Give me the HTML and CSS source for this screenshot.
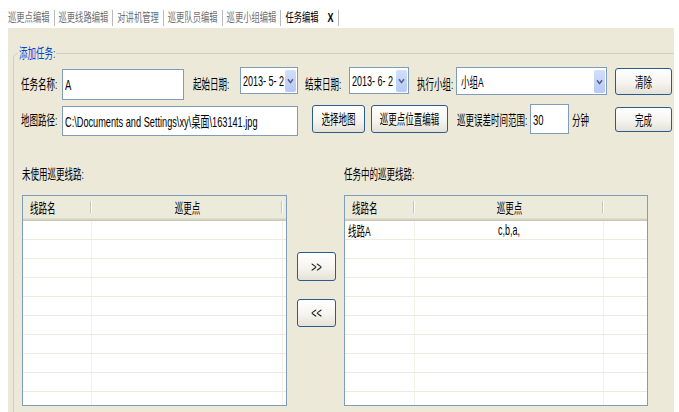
FILE: index.html
```html
<!DOCTYPE html>
<html lang="zh-CN">
<head>
<meta charset="utf-8">
<title>任务编辑</title>
<link rel="stylesheet" href="styles.css">
</head>
<body>
<div class="tabs">
  <div class="tab"><span class="tx">巡更点编辑</span></div>
  <div class="tab"><span class="tx">巡更线路编辑</span></div>
  <div class="tab"><span class="tx">对讲机管理</span></div>
  <div class="tab"><span class="tx">巡更队员编辑</span></div>
  <div class="tab"><span class="tx">巡更小组编辑</span></div>
  <div class="tab active"><span class="tx">任务编辑</span><span class="tx close">X</span></div>
</div>
<div class="panel">
  <div class="group">
    <div class="legend"><span class="tx">添加任务:</span></div>

    <div class="row r1">
      <div class="lbl w-l4"><span class="tx">任务名称:</span></div>
      <div class="field f-name"><span class="tx val">A</span></div>
      <div class="lbl l-start"><span class="tx">起始日期:</span></div>
      <div class="field f-date f-date1"><span class="tx val">2013- 5- 2</span><span class="drop"><svg width="7" height="6" viewBox="0 0 7 6"><path d="M1 1.2L3.5 4.6L6 1.2" fill="none" stroke="#4d6185" stroke-width="1.5"/></svg></span></div>
      <div class="lbl l-end"><span class="tx">结束日期:</span></div>
      <div class="field f-date f-date2"><span class="tx val">2013- 6- 2</span><span class="drop"><svg width="7" height="6" viewBox="0 0 7 6"><path d="M1 1.2L3.5 4.6L6 1.2" fill="none" stroke="#4d6185" stroke-width="1.5"/></svg></span></div>
      <div class="lbl l-team"><span class="tx">执行小组:</span></div>
      <div class="field f-team"><span class="tx val">小组A</span><span class="drop"><svg width="7" height="6" viewBox="0 0 7 6"><path d="M1 1.2L3.5 4.6L6 1.2" fill="none" stroke="#4d6185" stroke-width="1.5"/></svg></span></div>
      <div class="btn b-clear"><span class="tx">清除</span></div>
    </div>

    <div class="row r2">
      <div class="lbl w-l4"><span class="tx">地图路径:</span></div>
      <div class="field f-path"><span class="tx val">C:\Documents and Settings\xy\桌面\163141.jpg</span></div>
      <div class="btn b-map"><span class="tx">选择地图</span></div>
      <div class="btn b-pos"><span class="tx">巡更点位置编辑</span></div>
      <div class="lbl l-range"><span class="tx">巡更误差时间范围:</span></div>
      <div class="field f-min"><span class="tx val">30</span></div>
      <div class="lbl l-unit"><span class="tx">分钟</span></div>
      <div class="btn b-done"><span class="tx">完成</span></div>
    </div>

    <div class="lists">
      <div class="col">
        <div class="cap"><span class="tx">未使用巡更线路:</span></div>
        <div class="list list-l">
          <div class="lrow head"><div class="cell"><span class="tx">线路名</span></div><div class="cell c"><span class="tx">巡更点</span></div><div class="cell"></div></div>
          <div class="lrow"><div class="cell"></div><div class="cell"></div><div class="cell"></div></div>
          <div class="lrow"><div class="cell"></div><div class="cell"></div><div class="cell"></div></div>
          <div class="lrow"><div class="cell"></div><div class="cell"></div><div class="cell"></div></div>
          <div class="lrow"><div class="cell"></div><div class="cell"></div><div class="cell"></div></div>
          <div class="lrow"><div class="cell"></div><div class="cell"></div><div class="cell"></div></div>
          <div class="lrow"><div class="cell"></div><div class="cell"></div><div class="cell"></div></div>
          <div class="lrow"><div class="cell"></div><div class="cell"></div><div class="cell"></div></div>
          <div class="lrow"><div class="cell"></div><div class="cell"></div><div class="cell"></div></div>
          <div class="lrow"><div class="cell"></div><div class="cell"></div><div class="cell"></div></div>
          <div class="lrow"><div class="cell"></div><div class="cell"></div><div class="cell"></div></div>
        </div>
      </div>
      <div class="mid">
        <div class="btn arrow a-add"><span class="tx">&gt;&gt;</span></div>
        <div class="btn arrow a-del"><span class="tx">&lt;&lt;</span></div>
      </div>
      <div class="col">
        <div class="cap"><span class="tx">任务中的巡更线路:</span></div>
        <div class="list list-r">
          <div class="lrow head"><div class="cell"><span class="tx">线路名</span></div><div class="cell c"><span class="tx">巡更点</span></div><div class="cell"></div></div>
          <div class="lrow"><div class="cell"><span class="tx">线路A</span></div><div class="cell c"><span class="tx lat">c,b,a,</span></div><div class="cell"></div></div>
          <div class="lrow"><div class="cell"></div><div class="cell"></div><div class="cell"></div></div>
          <div class="lrow"><div class="cell"></div><div class="cell"></div><div class="cell"></div></div>
          <div class="lrow"><div class="cell"></div><div class="cell"></div><div class="cell"></div></div>
          <div class="lrow"><div class="cell"></div><div class="cell"></div><div class="cell"></div></div>
          <div class="lrow"><div class="cell"></div><div class="cell"></div><div class="cell"></div></div>
          <div class="lrow"><div class="cell"></div><div class="cell"></div><div class="cell"></div></div>
          <div class="lrow"><div class="cell"></div><div class="cell"></div><div class="cell"></div></div>
          <div class="lrow"><div class="cell"></div><div class="cell"></div><div class="cell"></div></div>
          <div class="lrow"><div class="cell"></div><div class="cell"></div><div class="cell"></div></div>
        </div>
      </div>
    </div>
  </div>
</div>
</body>
</html>
```

FILE: styles.css
```css
* { box-sizing: border-box; margin: 0; padding: 0; }

body {
  width: 679px;
  height: 412px;
  overflow: hidden;
  background: #fff;
  color: #000;
  font-family: "Liberation Sans", "Noto Sans CJK SC", sans-serif;
  font-size: 8.5px;
}

.tx {
  display: inline-block;
  transform: scaleY(1.6);
  white-space: nowrap;
}

/* tab strip */
.tabs {
  height: 28px;
  display: flex;
  align-items: flex-end;
  padding-left: 4px;
}
.tab {
  height: 16px;
  margin-bottom: 2px;
  padding: 0 4px;
  border-right: 1px solid #b9b9b9;
  line-height: 16px;
  font-size: 8.3px;
  color: #6f6f6f;
}
.tab .tx { transform: scaleY(1.45); }
.tab.active {
  display: flex;
  gap: 9px;
  color: #000;
  background: #fff;
}
.tab .close {
  font-size: 9px;
  font-weight: bold;
  transform: scaleY(1.35);
}

/* panel */
.panel {
  margin-left: 8px;
  width: 666px;
  height: 384px;
  background: #ece9d8;
  overflow: hidden;
}
.group {
  position: relative;
  margin: 25px 0 0 5px;
  width: 700px;
  height: 420px;
  border: 1px solid #d0d0bf;
  border-radius: 5px;
}
.legend {
  position: absolute;
  left: 4px;
  top: -7px;
  padding: 0 1px;
  line-height: 12px;
  background: #ece9d8;
  color: #0046d5;
}

/* form rows */
.row {
  display: flex;
  align-items: flex-start;
  padding-left: 7px;
}
.r1 { margin-top: 13px; }
.r2 { margin-top: 4px; }

.lbl {
  align-self: center;
  line-height: 12px;
  white-space: nowrap;
}
.w-l4 { width: 41px; }
.l-start { width: 47px; margin-left: 9px; }
.l-end { width: 44px; margin-left: 7px; }
.l-team { width: 39px; margin-left: 8px; }
.l-range { width: 73px; margin-left: 9px; }
.l-unit { width: 43px; margin-left: 3px; }

.field {
  display: flex;
  align-items: center;
  padding-left: 2px;
  background: #fff;
  border: 1px solid #7f9db9;
  font-size: 9.5px;
}
.field .val { flex: 1; }
.drop {
  width: 11px;
  flex: none;
  align-self: stretch;
  margin: 2px 1px 1px 0;
  border-radius: 2px;
  background: linear-gradient(#d3defc, #b6c9f5);
  display: flex;
  align-items: center;
  justify-content: center;
}

.f-name { width: 122px; height: 31px; margin-top: 2px; }
.f-date { font-size: 9px; }
.f-date1 { width: 58px; height: 27px; }
.f-date2 { width: 60px; height: 27px; }
.f-team { width: 151px; height: 28px; padding-left: 4px; font-size: 8.5px; }
.f-path { width: 236px; height: 30px; margin-top: 2px; font-size: 9.2px; }
.f-min { width: 39px; height: 30px; }

.btn {
  display: flex;
  align-items: center;
  justify-content: center;
  line-height: 12px;
  border: 1px solid #2d5b8e;
  border-radius: 3px;
  background: linear-gradient(#ffffff, #f5f4ef 55%, #e4e1d6);
  white-space: nowrap;
}
.b-clear { width: 57px; height: 27px; margin: 1px 0 0 8px; }
.b-map { width: 53px; height: 28px; margin: 1px 0 0 14px; }
.b-pos { width: 77px; height: 28px; margin: 1px 0 0 6px; }
.b-done { width: 57px; height: 25px; margin-top: 3px; }

/* lists */
.lists {
  display: grid;
  grid-template-columns: 265px 57px 304px;
  margin-top: 32px;
  padding-left: 8px;
}
.cap {
  height: 12px;
  line-height: 12px;
  margin-bottom: 15px;
}
.mid {
  display: flex;
  flex-direction: column;
  gap: 18px;
  padding: 84px 0 0 10px;
}
.arrow { width: 39px; font-size: 9px; }
.a-add { height: 29px; }
.a-del { height: 28px; }

.list {
  height: 211px;
  border: 1px solid #7f9db9;
  background: #fff;
  overflow: hidden;
}
.lrow {
  display: grid;
  height: 19px;
  border-bottom: 1px solid #eeebdd;
}
.list-l .lrow { grid-template-columns: 69px 191px 3px; }
.list-r .lrow { grid-template-columns: 70px 189px 43px; }

.cell {
  display: flex;
  align-items: center;
  padding-left: 3px;
  border-right: 1px solid #f2f0e7;
  white-space: nowrap;
}
.cell:last-child { border-right: 0; }
.cell.c { justify-content: center; padding-left: 0; }
.cell .lat { font-size: 9px; }

.head {
  height: 25px;
  border-bottom: 0;
  background: #ebeadb;
  box-shadow: inset 0 -1px #cbc7b8, inset 0 -2px #d6d2c2, inset 0 -3px #e2decd;
}
.head .cell {
  position: relative;
  border-right: 0;
  padding: 0 0 3px 7px;
}
.head .cell.c { padding-left: 0; }
.head .cell::after {
  content: "";
  position: absolute;
  right: 1px;
  top: 5px;
  bottom: 8px;
  width: 1px;
  background: #c7c5b2;
  box-shadow: 1px 0 #fff;
}
.head .cell:last-child::after { display: none; }
```
